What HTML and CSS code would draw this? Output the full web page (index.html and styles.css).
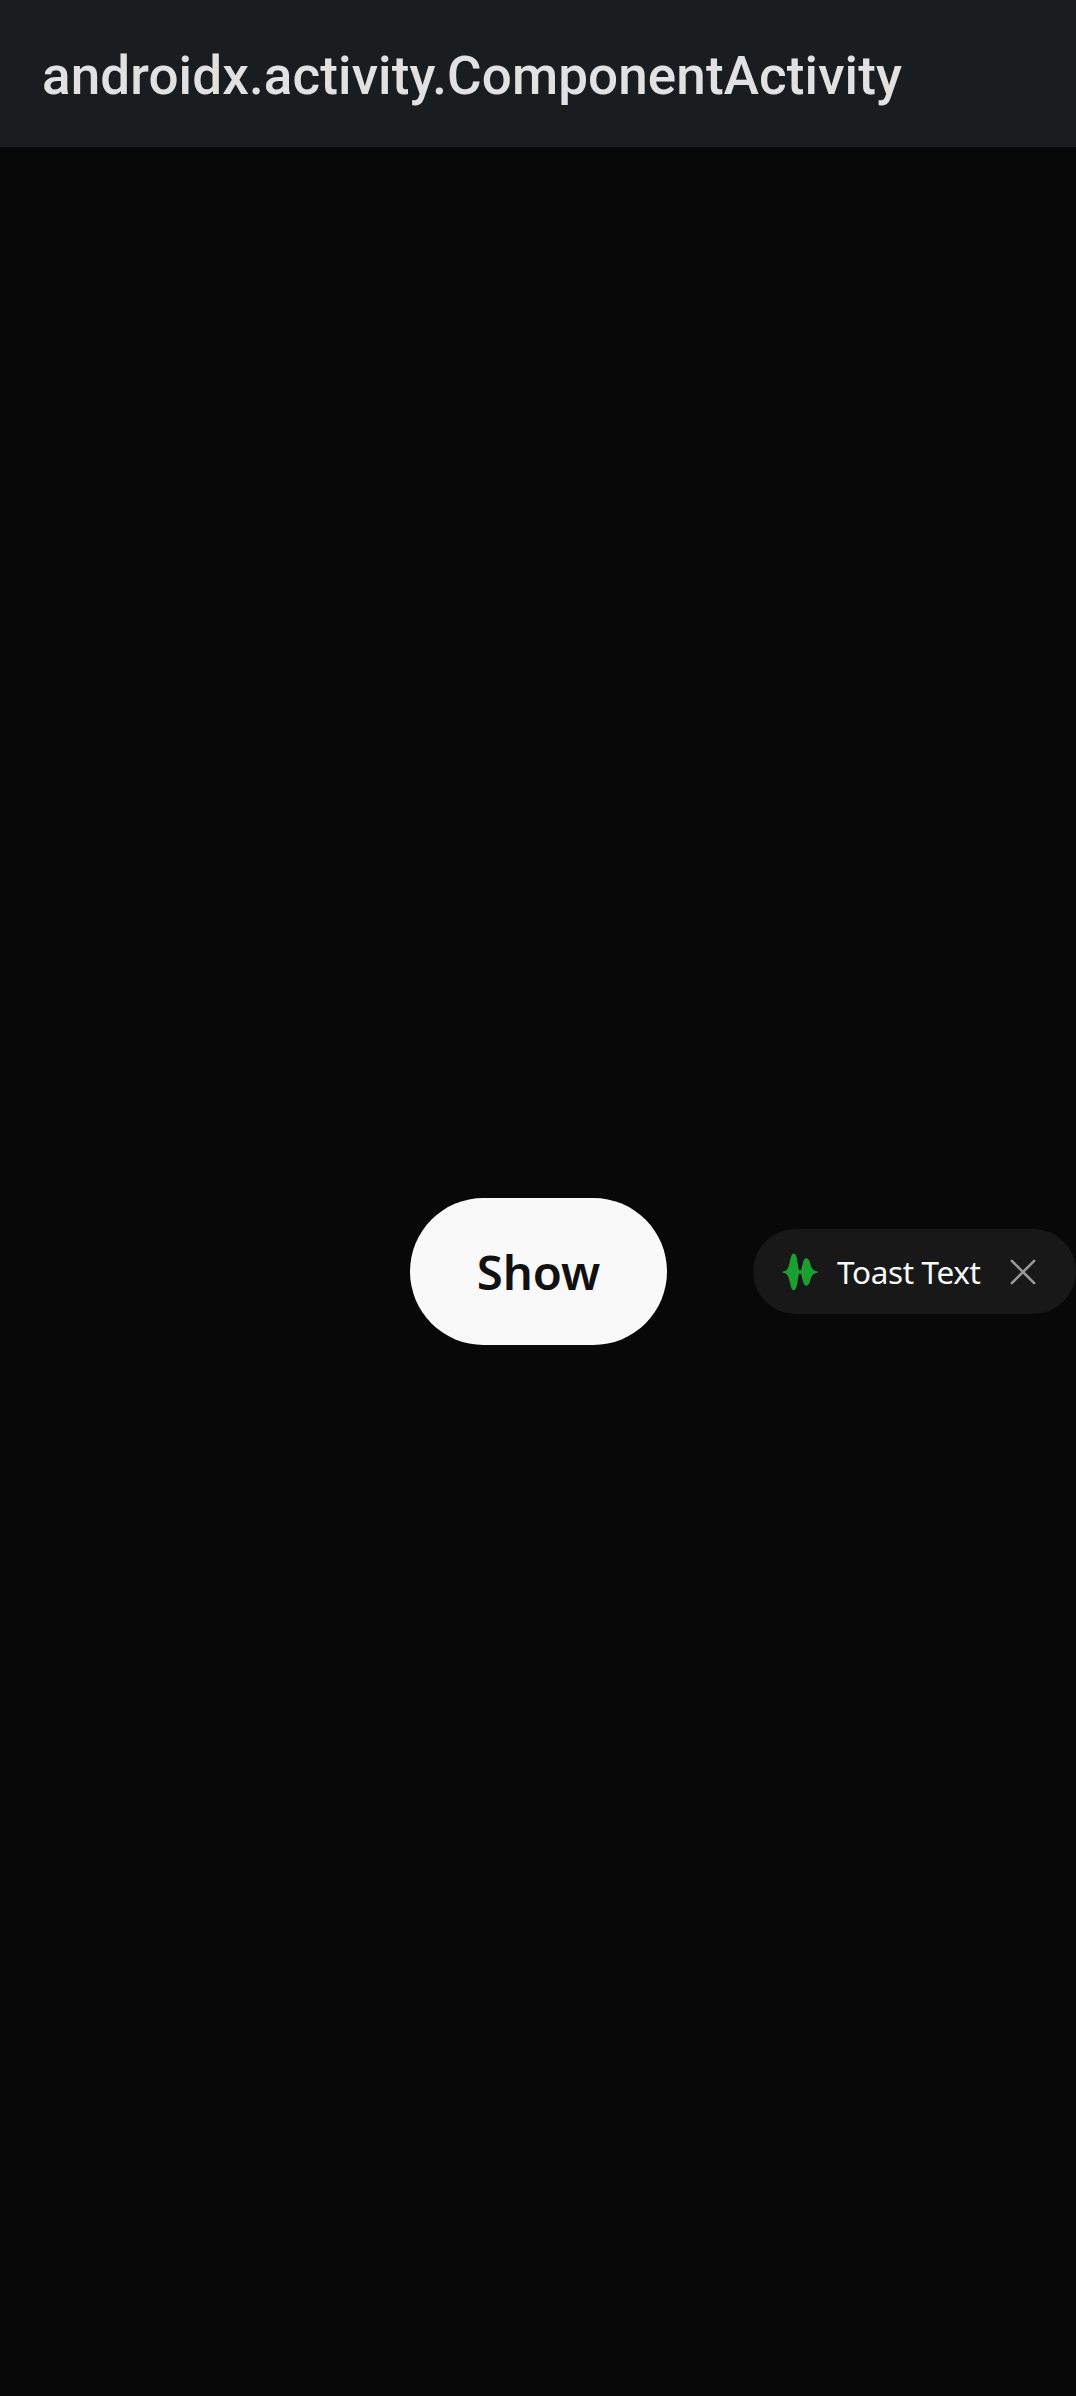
FILE: index.html
```html
<!DOCTYPE html>
<html lang="en">
<head>
<meta charset="utf-8">
<title>ComponentActivity</title>
<link rel="stylesheet" href="styles.css">
</head>
<body>
<header class="app-bar"><h1 class="title">androidx.activity.ComponentActivity</h1></header>
<main class="content">
<button class="show-button" type="button">Show</button>
<div class="toast" role="status">
<svg class="wave" viewBox="0 0 38 38" aria-hidden="true"><path d="M2 18.4C6 18.1 7.5 15 8.7 9.5C9.8 4.5 10.5 .6 12.7 .6C15 .6 15.8 4.5 16.7 10C17.4 14.5 17.8 17.6 19 17.6C20.2 17.6 20.7 15 21.6 11C22.5 7.2 23.5 5.2 25.4 5.2C27.5 5.2 28.4 7.5 29.4 11.2C30.7 15.5 32.5 18 36.4 18.4A.65 .65 0 0 1 36.4 19.7C32.5 20.1 30.7 22.5 29.4 26.8C28.4 30.5 27.5 32.8 25.4 32.8C23.5 32.8 22.5 30.8 21.6 27C20.7 23 20.2 20.4 19 20.4C17.8 20.4 17.4 23.5 16.7 28C15.8 33.5 15 37.2 12.7 37.2C10.5 37.2 9.8 33.5 8.7 28.5C7.5 23 6 20 2 19.7A.65 .65 0 0 1 2 18.4Z"/></svg>
<span class="message">Toast Text</span>
<button class="close" type="button" aria-label="Close"><svg class="cross" viewBox="0 0 26 26" aria-hidden="true"><path d="M1.8 1.8L24.2 24.2M24.2 1.8L1.8 24.2"/></svg></button>
</div>
</main>
</body>
</html>
```
FILE: styles.css
```css
* { box-sizing: border-box; }
body { margin: 0; height: 2396px; display: flex; flex-direction: column; background: #080808; overflow: hidden; }
button { border: 0; margin: 0; }
.app-bar { height: 147px; flex: none; display: flex; align-items: center; padding: 4px 42px 0; background: #1a1d1f; }
.title { margin: 0; font: 500 53px/62px Roboto, sans-serif; letter-spacing: .11px; color: #e1e1e1; white-space: nowrap; }
.content { flex: 1; display: grid; grid-template-columns: 410px 257px 86px 323px; align-items: center; }
.show-button { grid-column: 2; height: 147px; padding: 0; border-radius: 74px; background: #f9f9f9; color: #111; font: 600 47.25px/64px "Noto Sans", sans-serif; }
.toast { grid-column: 4; height: 85px; display: flex; align-items: center; padding-left: 28px; border-radius: 43px; background: #181818; }
.wave { width: 38px; height: 38px; fill: #1c9f32; }
.message { width: 144px; margin-left: 18px; color: #f9f9f9; font: 400 31.5px/42px "Noto Sans", sans-serif; letter-spacing: -.36px; white-space: nowrap; }
.close { display: flex; padding: 0; margin-left: 29px; background: none; }
.cross { width: 26px; height: 26px; fill: none; stroke: #999; stroke-width: 2.6; stroke-linecap: round; }
```
